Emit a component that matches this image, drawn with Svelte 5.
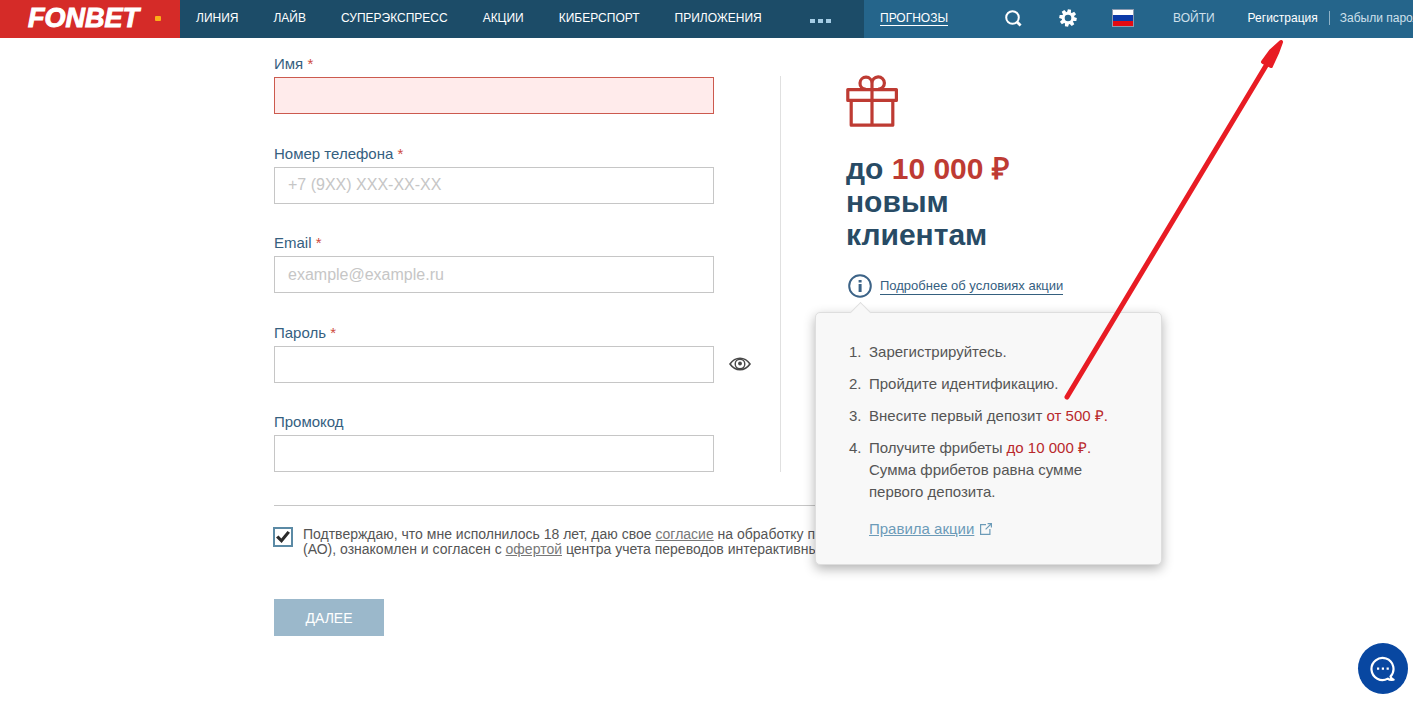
<script>
  const sections = ['ЛИНИЯ', 'ЛАЙВ', 'СУПЕРЭКСПРЕСС', 'АКЦИИ', 'КИБЕРСПОРТ', 'ПРИЛОЖЕНИЯ'];
  const fields = [
    { id: 'name', label: 'Имя', required: true, type: 'text', invalid: true },
    { id: 'phone', label: 'Номер телефона', required: true, type: 'tel', placeholder: '+7 (9XX) XXX-XX-XX' },
    { id: 'email', label: 'Email', required: true, type: 'email', placeholder: 'example@example.ru' },
    { id: 'password', label: 'Пароль', required: true, type: 'password', reveal: true },
    { id: 'promo', label: 'Промокод', type: 'text' }
  ];
  const teeth = [0, 45, 90, 135, 180, 225, 270, 315];
</script>

<div class="page">
  <header>
    <a class="logo" href="#home"><span>FONBET</span><i></i></a>
    <nav>
      {#each sections as s}<a href="#section">{s}</a>{/each}
      <button class="dots" aria-label="Ещё"><i></i><i></i><i></i></button>
    </nav>
    <div class="tools">
      <a class="tips" href="#tips">ПРОГНОЗЫ</a>
      <button class="search" aria-label="Поиск">
        <svg width="18" height="18" viewBox="0 0 18 18" fill="none" stroke="#fff" stroke-width="2"><circle cx="8.5" cy="8.5" r="6.3" /><path d="M12.8 12.8l3.8 3.8" stroke-width="2.8" /></svg>
      </button>
      <button class="settings" aria-label="Настройки">
        <svg width="18" height="18" viewBox="-9 -9 18 18">
          {#each teeth as t}<path d="M-2-5.5L-1.6-8.7H1.6L2-5.5z" fill="#fff" transform="rotate({t + 10})" />{/each}
          <circle r="4.8" fill="none" stroke="#fff" stroke-width="3" />
        </svg>
      </button>
      <button class="lang" aria-label="Язык"><i></i></button>
      <a class="login" href="#login">ВОЙТИ</a>
      <a class="reg" href="#reg">Регистрация</a>
      <a class="forgot" href="#forgot">Забыли пароль</a>
    </div>
  </header>

  <main>
    <div class="columns">
      <form id="signup">
        {#each fields as f}
          <div class="field">
            <label for={f.id}>{f.label}{#if f.required}{' '}<em>*</em>{/if}</label>
            <div class="control">
              <input id={f.id} type={f.type} placeholder={f.placeholder} class:invalid={f.invalid} />
              {#if f.reveal}
                <button type="button" class="eye" aria-label="Показать пароль">
                  <svg width="22" height="14" viewBox="0 0 22 14" fill="none" stroke="#484848" stroke-width="1.6"><path d="M1 7Q5 1.3 11 1.3T21 7Q17 12.7 11 12.7T1 7z" /><circle cx="11" cy="7" r="4.8" stroke-width="1.4" /><circle cx="11" cy="6.5" r="1.9" fill="#484848" stroke="none" /></svg>
                </button>
              {/if}
            </div>
          </div>
        {/each}
      </form>

      <aside>
        <svg class="gift" width="52" height="52" viewBox="0 0 52 52" fill="none" stroke="#be3b33" stroke-width="3.2" stroke-linejoin="round">
          <rect x="1.8" y="14.6" width="48.6" height="10.8" /><path d="M5.2 25.5V50.2H46.8V25.5M26 14.5V50M26 14.5V8.2A6.2 6.2 0 1 1 32.2 14.2M26 8.2A6 6 0 1 0 19.6 14.2" />
        </svg>
        <h2>до <b>10 000 ₽</b><br />новым<br />клиентам</h2>
        <div class="more">
          <svg width="26" height="26" viewBox="0 0 26 26"><circle cx="13" cy="13" r="10.8" fill="none" stroke="#3c6387" stroke-width="2" /><path d="M11.6 7h3v2.4h-3zM11.6 11h3v8h-3z" fill="#3c6387" /></svg>
          <a href="#terms">Подробнее об условиях акции</a>
          <div class="popup">
            <ol>
              <li>Зарегистрируйтесь.</li>
              <li>Пройдите идентификацию.</li>
              <li>Внесите первый депозит <span>от 500 ₽.</span></li>
              <li>Получите фрибеты <span>до 10 000 ₽.</span><br />Сумма фрибетов равна сумме первого депозита.</li>
            </ol>
            <a class="rules" href="#rules"><span>Правила акции</span><svg width="12" height="12" viewBox="0 0 12 12" fill="none" stroke="#6c9bb8" stroke-width="1.2"><path d="M6 1.6H.6v9.8h9.3V6M7.6.6h3.8v4M11.2.8L5.6 6.4" /></svg></a>
          </div>
        </div>
      </aside>
    </div>

    <div class="consent">
      <input id="agree" type="checkbox" checked />
      <label for="agree">Подтверждаю, что мне исполнилось 18 лет, даю свое <a href="#consent">согласие</a> на обработку пер<br />(АО), ознакомлен и согласен с <a href="#offer">офертой</a> центра учета переводов интерактивных</label>
    </div>
    <button class="next" form="signup">ДАЛЕЕ</button>
  </main>

  <svg class="arrow" width="222" height="362" viewBox="0 0 222 362" fill="#e81c24" stroke="#e81c24" stroke-linecap="round" stroke-linejoin="round">
    <path d="M4 359L204 26" stroke-width="5" /><path d="M218 4L208 13 200 24 208 28 214 15z" stroke-width="4" />
  </svg>
  <button class="chat" aria-label="Чат">
    <svg width="26" height="26" viewBox="0 0 26 26" fill="none" stroke="#fff" stroke-width="2.2" stroke-linejoin="round"><path d="M20.5 20.5A11 11 0 1 0 17.8 22.6Q19.5 24.2 23.6 23.7 20.8 22.6 20.5 20.5z" /><path d="M7 12.6h2.2M11.8 12.6H14M16.6 12.6h2.2" /></svg>
  </button>
</div>

<style>
  :global(body) { margin: 0; background: #fff; font-family: "Liberation Sans", Arial, sans-serif; }
  * { box-sizing: border-box; }
  .page { position: relative; min-height: 100vh; overflow: hidden; }
  button { border: 0; padding: 0; background: none; font: inherit; display: flex; align-items: center; justify-content: center; }
  header { display: flex; height: 38px; background: #1c4c68; color: #fff; font-size: 12px; white-space: nowrap; }
  header a { color: inherit; text-decoration: none; }
  .logo { flex: 0 0 180px; display: flex; align-items: center; justify-content: space-between; padding: 0 19px 2px 28px; background: #d52b28; font-size: 27px; font-weight: bold; font-style: italic; -webkit-text-stroke: 1px #fff; }
  .logo i { width: 6px; height: 5px; border-radius: 1px; background: #fcaf17; }
  nav { flex: 0 0 684px; display: flex; align-items: center; gap: 35px; padding: 0 33px 2px 16px; }
  .dots { gap: 3px; margin-left: auto; padding-top: 6px; }
  .dots i { width: 5px; height: 4px; background: #a5cde6; }
  .tools { flex: 1; min-width: 0; display: flex; align-items: center; padding: 0 0 2px 16px; background: #25658b; }
  .tools > * { flex: none; }
  .tools .tips { border-bottom: 1px solid #fff; }
  .search { margin-left: 56px; }
  .settings { margin-left: 37px; }
  .lang { margin-left: 35px; }
  .lang i { width: 22px; height: 18px; border: 1px solid #8c9bb0; background: linear-gradient(#fff 0 33%, #0b3aa8 33% 67%, #e40a12 67%); }
  .tools .login { margin-left: 39px; color: #cfe0eb; }
  .reg { margin-left: 33px; }
  .tools .forgot { margin-left: 11px; padding-left: 10px; border-left: 1px solid #8fb2c7; color: #cfe0eb; }

  main { width: 865px; max-width: 100%; margin: 0 auto; padding-top: 16px; }
  .columns { display: flex; align-items: flex-start; }
  form { width: 507px; min-height: 418px; display: flex; flex-direction: column; justify-content: space-between; background: linear-gradient(#e0e0e0, #e0e0e0) right 22px / 1px 100% no-repeat; }
  .field label { display: block; height: 23px; line-height: 20px; font-size: 15px; color: #35607f; }
  .field em { font-style: normal; color: #ce4a3e; }
  .control { display: flex; align-items: center; gap: 15px; }
  .control input { width: 440px; height: 37px; padding: 0 13px; border: 1px solid #c6c6c6; background: #fff; font: 16px "Liberation Sans", Arial, sans-serif; color: #444; outline: 0; }
  .control input::placeholder { color: #c6c6c6; opacity: 1; }
  .control .invalid { border-color: #cc5a4e; background: #ffebeb; }
  aside { height: 0; padding: 21px 0 0 65px; }
  .gift { display: block; }
  h2 { margin: 25px 0 22px; font-size: 30px; line-height: 33px; color: #284b65; }
  h2 b { color: #be3b33; }
  .more { position: relative; display: flex; align-items: center; gap: 7px; padding-left: 1px; font-size: 13px; }
  .more > a { color: #35607f; text-decoration: none; border-bottom: 1px solid #35607f; line-height: 16px; white-space: nowrap; }
  .popup { position: absolute; z-index: 2; left: -31px; top: 39px; width: 347px; padding: 28px 34px 24px; background: #f8f8f8; border: 1px solid #dedede; border-radius: 5px; box-shadow: 0 4px 12px rgba(0, 0, 0, .3); font-size: 15px; line-height: 22px; color: #555; }
  .popup::before { content: ""; position: absolute; left: 37px; top: -8px; width: 14px; height: 14px; background: #f8f8f8; border: solid #dedede; border-width: 1px 0 0 1px; transform: rotate(45deg); }
  ol { list-style: none; counter-reset: step; margin: 0; padding: 0; }
  li { position: relative; padding-left: 19px; margin-bottom: 10px; counter-increment: step; }
  li::before { content: counter(step) "."; position: absolute; left: -1px; }
  li span { color: #b9282c; }
  .rules { display: flex; align-items: center; gap: 6px; margin: 15px 0 0 19px; color: #6c9bb8; text-decoration: none; }
  .rules span { text-decoration: underline; }

  .consent { display: flex; gap: 10px; margin-top: 33px; padding-top: 21px; border-top: 1px solid #c6c6c6; font-size: 14px; line-height: 15px; color: #555; white-space: nowrap; }
  .consent input { appearance: none; flex: none; width: 20px; height: 20px; margin: 0 0 0 -1px; border: 2px solid #5b8aa5; background: #fff; display: grid; place-items: center; }
  .consent input:checked::before { content: ""; width: 14px; height: 12px; background: #2b2b2b; clip-path: polygon(0 55%, 18% 38%, 38% 62%, 82% 0, 100% 15%, 40% 100%); }
  .consent a { color: #777; }
  .next { width: 110px; height: 37px; margin-top: 42px; background: #9bb8cb; color: #fff; font-size: 14px; }
  .arrow { position: absolute; z-index: 3; left: 1063px; top: 38px; pointer-events: none; }
  .chat { position: absolute; right: 5px; bottom: 10px; width: 50px; height: 51px; border-radius: 50%; background: #0847a1; }
</style>
